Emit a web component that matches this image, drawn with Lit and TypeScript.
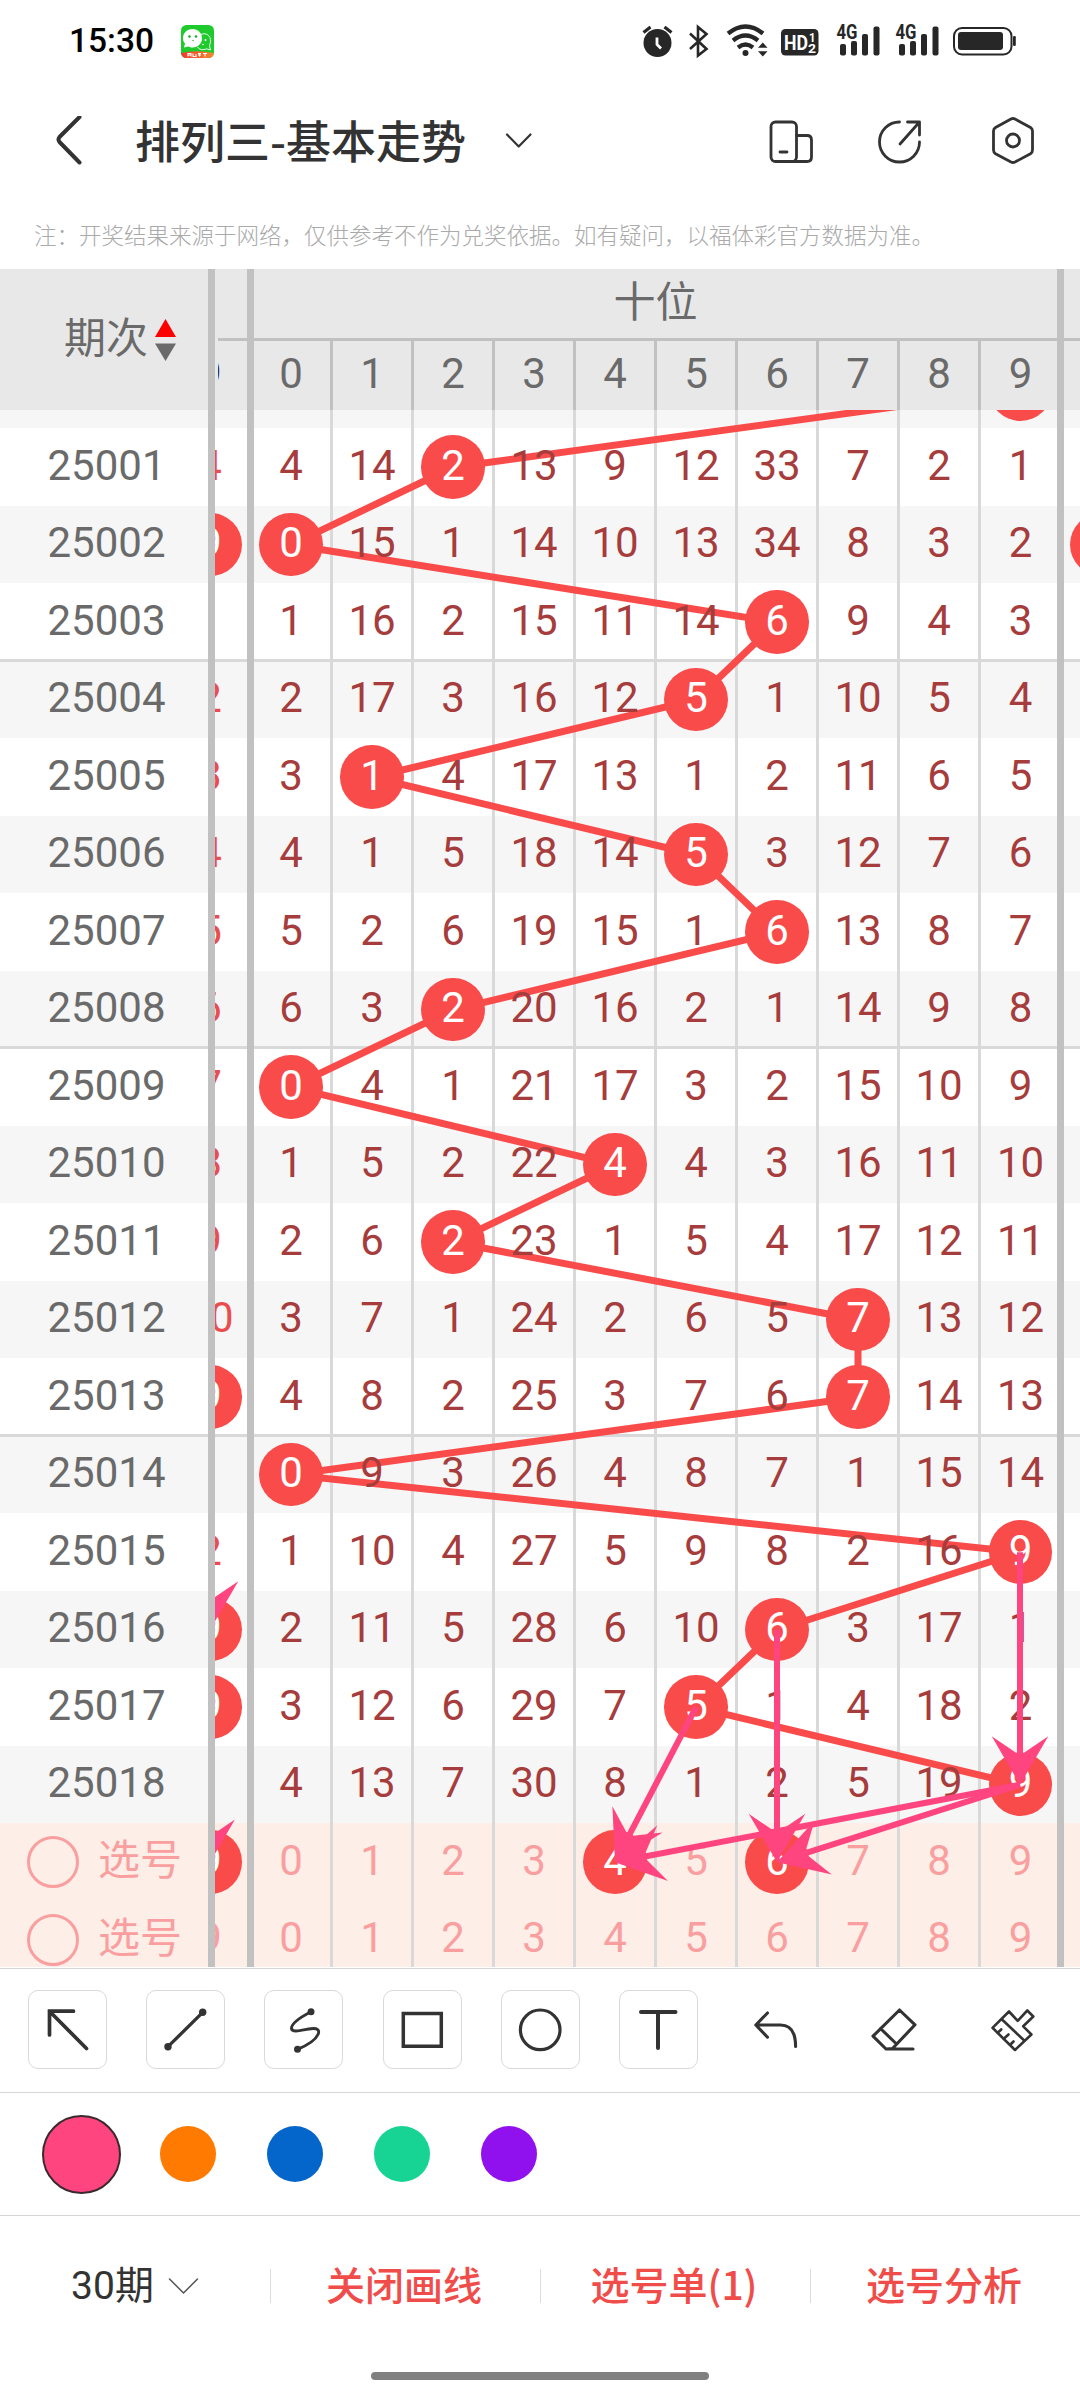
import { LitElement, html, css, svg, nothing } from "lit";
import { customElement, property } from "lit/decorators.js";
import { classMap } from "lit/directives/class-map.js";

interface Draw {
  issue: string;
  /** Trailing column of the group scrolled off to the left; "*" marks a hit. */
  prev: string;
  cells: string[];
  hit: number;
}

/* The first entry sits behind the header: only the foot of its ball shows. */
const raw: [string, string, string, number][] = [
  ["", "", ",,,,,,,,,", 9],
  ["25001", "4", "4,14,2,13,9,12,33,7,2,1", 2],
  ["25002", "9*", "0,15,1,14,10,13,34,8,3,2", 0],
  ["25003", "", "1,16,2,15,11,14,6,9,4,3", 6],
  ["25004", "2", "2,17,3,16,12,5,1,10,5,4", 5],
  ["25005", "3", "3,1,4,17,13,1,2,11,6,5", 1],
  ["25006", "4", "4,1,5,18,14,5,3,12,7,6", 5],
  ["25007", "5", "5,2,6,19,15,1,6,13,8,7", 6],
  ["25008", "6", "6,3,2,20,16,2,1,14,9,8", 2],
  ["25009", "7", "0,4,1,21,17,3,2,15,10,9", 0],
  ["25010", "8", "1,5,2,22,4,4,3,16,11,10", 4],
  ["25011", "9", "2,6,2,23,1,5,4,17,12,11", 2],
  ["25012", "10", "3,7,1,24,2,6,5,7,13,12", 7],
  ["25013", "9*", "4,8,2,25,3,7,6,7,14,13", 7],
  ["25014", "", "0,9,3,26,4,8,7,1,15,14", 0],
  ["25015", "2", "1,10,4,27,5,9,8,2,16,9", 9],
  ["25016", "9*", "2,11,5,28,6,10,6,3,17,1", 6],
  ["25017", "9*", "3,12,6,29,7,5,1,4,18,2", 5],
  ["25018", "", "4,13,7,30,8,1,2,5,19,9", 9],
];
const draws: Draw[] = raw.map(([issue, prev, c, hit]) => ({ issue, prev, cells: c.split(","), hit }));
const digits = ["0", "1", "2", "3", "4", "5", "6", "7", "8", "9"];
const picks = [
  { prev: "9*", chosen: [4, 6] },
  { prev: "9", chosen: [] as number[] },
];

const ROW = 77.5;
const colX = (c: number) => 76 + 81 * c;
const rowY = (r: number) => ROW * (r + 0.5);

/* [fromX, fromY, toX, toY, head scale] */
const arrows: number[][] = [
  [colX(9), rowY(15), colX(9), rowY(18), 1],
  [colX(6), rowY(16), colX(6), rowY(19), 1],
  [colX(5), rowY(17), colX(4), rowY(19), 1],
  [colX(9), rowY(18), colX(4), rowY(19), 1],
  [colX(9), rowY(18), colX(6), rowY(19), 1],
  [colX(-1), rowY(13), colX(-1), rowY(16), 1],
  [colX(-1), rowY(17), colX(-1), rowY(19), 0.88],
];

const arrowShape = ([x1, y1, x2, y2, s]: number[]) => {
  const len = Math.hypot(x2 - x1, y2 - y1);
  const dx = (x2 - x1) / len;
  const dy = (y2 - y1) / len;
  const at = (back: number, side: number) =>
    `${(x2 - dx * back * s + dy * side * s).toFixed(1)},${(y2 - dy * back * s - dx * side * s).toFixed(1)}`;
  return svg`
    <line x1=${x1} y1=${y1} x2=${x2 - dx * 25} y2=${y2 - dy * 25} stroke="#ff457f" stroke-width="6"/>
    <polygon points="${at(0, 0)} ${at(48.5, 28.3)} ${at(32, 4)} ${at(32, -4)} ${at(48.5, -28.3)}" fill="#ff457f"/>`;
};

const groupClass = (i: number) => ({
  row: true,
  alt: i % 2 === 0,
  last: i % 5 === 3 && i < draws.length - 1,
  first: i > 3 && i % 5 === 4,
});

@customElement("trend-board")
class TrendBoard extends LitElement {
  static styles = css`
    :host { display: block; height: 1698px; overflow: hidden; font: 42px/48px Roboto, "Noto Sans CJK SC", sans-serif; color: #6a6a6a; }
    .head { display: flex; height: 141px; background: #e8e8e8; }
    .issue-head { box-sizing: border-box; width: 215px; border-right: 7px solid #c1c1c1; display: flex; align-items: center; padding-left: 64px; gap: 7px; }
    .issue-head span { width: 84px; padding-bottom: 1px; }
    .sort { width: 21px; height: 42px; display: block; }
    .head-grid { flex: 1; overflow: hidden; }
    .titles { display: grid; grid-template-columns: 32px 810px 23px; height: 69px; }
    .titles > div + div { border-left: 7px solid #c1c1c1; }
    .group-name { text-align: center; }
    .group-name span { display: block; padding-top: 10px; line-height: 48px; }
    .nums { margin-left: 3px; border-top: 3px solid #c1c1c1; height: 69px; overflow: hidden; }
    .nums .cells { margin-left: -3px; height: 69px; width: 865px; }
    .nums .cell { border-color: #c1c1c1; padding-bottom: 4px; }
    .nums .cell.prev { color: #333; }
    .body { display: flex; height: 1557px; overflow: hidden; }
    .issues { box-sizing: border-box; width: 215px; border-right: 7px solid #c1c1c1; }
    .issues, .area { margin-top: -59.25px; height: 1627.5px; flex-shrink: 0; }
    .area { width: 865px; position: relative; overflow: hidden; }
    .row { height: 77.5px; background-color: #fff; background-repeat: no-repeat; }
    .row.alt { background-color: #f6f6f6; }
    .row.last { background-image: linear-gradient(#d9d9d9, #d9d9d9); background-size: 100% 2px; background-position: 0 100%; }
    .row.first { background-image: linear-gradient(#d9d9d9, #d9d9d9); background-size: 100% 1px; background-position: 0 0; }
    .row.pick { background-color: #feeee8; color: #fa9f9f; }
    .issue { box-sizing: border-box; padding: 0 0 2.5px 5px; display: flex; align-items: center; justify-content: center; }
    .issue.pick { padding: 0 0 0 27px; justify-content: flex-start; gap: 19px; }
    .radio { box-sizing: border-box; width: 52px; height: 52px; border: 3px solid #fa9f9f; border-radius: 50%; }
    .issue.pick span { margin-top: -2px; }
    .cells { display: grid; grid-template-columns: 32px 83px repeat(8, 81px) 79px 23px; }
    .cell { box-sizing: border-box; border-left: 3px solid #d9d9d9; display: flex; align-items: center; justify-content: center; min-width: 0; }
    .cell.prev { border-left: 0; }
    .cell.prev > * { margin-left: -42px; }
    .cell.start { border-left: 7px solid #c1c1c1; padding-right: 2px; }
    .cell.end { padding-left: 3px; }
    .cell.next { border-left: 7px solid #c1c1c1; }
    .cell.next > * { margin-left: 59px; }
    .row .cell { color: #a63c3c; }
    .row .cell.prev { color: #e94d4d; }
    .row.pick .cell { color: #fa9f9f; }
    .num { position: relative; z-index: 2; padding-bottom: 2.5px; }
    .hit { position: relative; z-index: 2; box-sizing: border-box; flex: none; width: 63.5px; height: 63.5px; border-radius: 50%; background: #fa4b4b; color: #fff; display: flex; align-items: center; justify-content: center; padding-bottom: 2.5px; }
    .layer { position: absolute; left: 0; top: 0; width: 865px; height: 1627.5px; z-index: 1; pointer-events: none; }
    .layer.top { z-index: 3; }
  `;

  private value(text: string, hit: boolean) {
    return hit ? html`<span class="hit">${text}</span>` : html`<span class="num">${text}</span>`;
  }

  private cells(prev: string, values: string[], hits: number[], nextHit = false) {
    return html`
      <div class="cell prev">${this.value(prev.replace("*", ""), prev.endsWith("*"))}</div>
      ${values.map(
        (v, c) => html`<div class=${classMap({ cell: true, start: c === 0, end: c === 9 })}>${this.value(v, hits.includes(c))}</div>`
      )}
      <div class="cell next">${nextHit ? this.value("", true) : nothing}</div>`;
  }

  render() {
    const trend = draws.map((d, r) => `${colX(d.hit)},${rowY(r)}`).join(" ");
    return html`
      <div class="head">
        <div class="issue-head">
          <span>期次</span>
          <svg class="sort" viewBox="0 0 21 42"><path d="M10.5 0 21 18H0z" fill="#f00"/><path d="M0 24.500H21L10.500 42z" fill="#6a6a6a"/></svg>
        </div>
        <div class="head-grid">
          <div class="titles"><div></div><div class="group-name"><span>十位</span></div><div></div></div>
          <div class="nums">
            <div class="cells">
              <div class="cell prev"><span>9</span></div>
              ${digits.map((d, c) => html`<div class=${classMap({ cell: true, start: c === 0, end: c === 9 })}>${d}</div>`)}
              <div class="cell next"></div>
            </div>
          </div>
        </div>
      </div>
      <div class="body">
        <div class="issues">
          ${draws.map((d, i) => html`<div class=${classMap({ ...groupClass(i), issue: true })}>${d.issue}</div>`)}
          ${picks.map(() => html`<div class="row issue pick"><i class="radio"></i><span>选号</span></div>`)}
        </div>
        <div class="area">
          ${draws.map(
            (d, i) => html`<div class=${classMap({ ...groupClass(i), cells: true })}>${this.cells(d.prev, d.cells, [d.hit], d.issue === "25002")}</div>`
          )}
          ${picks.map((p) => html`<div class="row cells pick">${this.cells(p.prev, digits, p.chosen)}</div>`)}
          <svg class="layer" viewBox="0 0 865 1627.5"><polyline points=${trend} fill="none" stroke="#fa4b4b" stroke-width="7"/></svg>
          <svg class="layer top" viewBox="0 0 865 1627.5">${arrows.map(arrowShape)}</svg>
        </div>
      </div>`;
  }
}

const toolIcons = [
  svg`<path d="M21.500 45V21.200H45.500M21.500 21.200 58.500 58.500" stroke-width="3.700" stroke-linejoin="miter"/>`,
  svg`<path d="M22 56.700 56.700 22.300" stroke-width="3.300"/><circle cx="22" cy="56.700" r="3.700" class="dot"/><circle cx="56.700" cy="22.300" r="3.700" class="dot"/>`,
  svg`<path d="M47 21.700C34 28.500 27 34 27.500 38.500C28 43.500 40 39.500 47 38.700C53.500 38 56 40 54 44.500C51 51 44 55 33.500 59.300" stroke-width="2.900"/><circle cx="47" cy="21.700" r="3.500" class="dot"/><circle cx="33.500" cy="59.300" r="3.500" class="dot"/>`,
  svg`<path d="M20.300 23.400H58.300V56.200H20.300z" stroke-width="3.500" stroke-linejoin="miter"/>`,
  svg`<circle cx="39.200" cy="39.800" r="19.800" stroke-width="3.200"/>`,
  svg`<path d="M22 22H56.500M39 22V58" stroke-width="4"/>`,
  svg`<path d="M30.500 23 18.800 35 30.500 47.200M18.800 35H43.500C54 35 58.600 42 58.600 56.500" stroke-width="3.100"/>`,
  svg`<path d="M44.500 20 60 34.800 37.500 58.500 31 59 18 46.200zM25.500 38.500 41 53.500M31 59H58" stroke-width="3.100"/>`,
  svg`<path d="M35 21.500 43.700 30.800 53.300 20.500 59.300 26.500 49.200 36.300 57.400 44.500 41 60 18.500 37.800zM28 29.500 50.200 50.500M23.500 43 27.200 39.500M29.500 49 34.500 44.500M36 55 39.500 51.500" stroke-width="2.600"/>`,
];

@customElement("draw-tools")
class DrawTools extends LitElement {
  static styles = css`
    :host { display: block; background: #fff; }
    .tools { box-sizing: border-box; height: 124px; border-top: 1.5px solid #d6d6d6; padding: 20.500px 0 0 28px; display: flex; gap: 39.200px; }
    .tool { box-sizing: border-box; width: 79px; height: 79px; border: 1px solid #d9d9d9; border-radius: 10px; flex: none; }
    .tool.plain { border-color: transparent; }
    .tool svg { display: block; width: 79px; height: 79px; margin: -1px; fill: none; stroke: #333; stroke-linecap: round; stroke-linejoin: round; }
    .tool .dot { fill: #333; stroke: none; }
    .swatches { box-sizing: border-box; height: 123px; border-top: 1.5px solid #d6d6d6; padding-left: 42px; display: flex; align-items: center; gap: 50.500px; }
    .swatch { width: 56.400px; height: 56.400px; border-radius: 50%; flex: none; }
    .swatch.pink { box-sizing: border-box; width: 79px; height: 79px; margin-right: -11.500px; background: #ff457f; border: 2px solid #3a2a30; }
    .orange { background: #ff7a00; }
    .blue { background: #0466cb; }
    .green { background: #18d494; }
    .purple { background: #9010ee; }
  `;

  render() {
    return html`
      <div class="tools">
        ${toolIcons.map((icon, i) => html`<div class=${classMap({ tool: true, plain: i > 5 })}><svg viewBox="0 0 79 79">${icon}</svg></div>`)}
      </div>
      <div class="swatches">
        ${["pink", "orange", "blue", "green", "purple"].map((c) => html`<div class="swatch ${c}"></div>`)}
      </div>`;
  }
}

@customElement("status-bar")
class StatusBar extends LitElement {
  @property() time = "";

  static styles = css`
    :host { box-sizing: border-box; display: flex; align-items: center; height: 82px; padding: 0 60px 0 69px; font: 500 33.500px/40px Roboto, sans-serif; color: #000; }
    .time { width: 112px; }
    .chat { display: block; width: 33px; height: 33px; }
    .system { display: block; width: 380px; height: 50px; margin-left: auto; }
    .tag { font: 700 12px Roboto, sans-serif; }
    .hd { font: 700 19.500px Roboto, sans-serif; }
    .net { font: 700 19.500px Roboto, sans-serif; }
  `;

  private bars(x: number) {
    return svg`<text class="net" x=${x - 3.5} y="38" textLength="21" lengthAdjust="spacingAndGlyphs">4G</text>
      <rect x=${x} y="43" width="6" height="11.500" rx="2"/><rect x=${x + 11} y="40" width="6" height="14.500" rx="2"/>
      <rect x=${x + 22} y="33" width="6" height="21.500" rx="2"/><rect x=${x + 33.5} y="25.500" width="6" height="29" rx="2"/>`;
  }

  render() {
    return html`
      <span class="time">${this.time}</span>
      <svg class="chat" viewBox="0 0 33 33">
        <defs><clipPath id="r"><rect width="33" height="33" rx="5.500"/></clipPath>
        <linearGradient id="g"><stop stop-color="#f03a2c"/><stop offset="1" stop-color="#f58a30"/></linearGradient></defs>
        <g clip-path="url(#r)">
          <rect width="33" height="33" fill="#1fcb2c"/>
          <path d="M20 9.500C25 7 30 11 29.500 16C29.500 18.500 28.500 20 28.500 21L29.500 25L25.500 23.800C22 25.500 18 24.500 16.500 22" fill="none" stroke="#fff" stroke-width=".9"/>
          <path d="M11.500 4C17 4 21 8 21 13.300C21 18.500 17 22.500 11.500 22.500C9.500 22.500 8.500 22 7.500 21.500L3 22.500L4 18.500C2.500 17 2 15 2 13.300C2 8 6 4 11.500 4z" fill="#fff"/>
          <circle cx="8.500" cy="11.500" r="1.300" fill="#1fa52c"/><circle cx="15" cy="11.500" r="1.300" fill="#1fa52c"/><circle cx="12" cy="15.500" r=".7" fill="#1fa52c"/>
          <circle cx="24.500" cy="15" r="1" fill="#fff"/><circle cx="22" cy="19.500" r=".8" fill="#fff"/>
          <path d="M0 28Q16 24.500 33 28V33H0z" fill="url(#g)"/>
          <path d="M7 31.500V28.500H10V31.500M7 30H10M12 28.500V31.500H15V29M17 28.500H20M17 30H20M18.500 28.500V31.500M22 28.500H26M24 28.500V31.500" stroke="#fff" stroke-width="1.100" fill="none"/>
        </g>
      </svg>
      <svg class="system" viewBox="640 15 380 50" fill="#272727">
        <circle cx="657.500" cy="42" r="14"/><path d="M643.500 31.500 650.500 26M671.500 31.500 664.500 26" stroke="#272727" stroke-width="3.200"/>
        <path d="M657 36.500V43.500L661 47.500" fill="none" stroke="#fff" stroke-width="2.800"/>
        <path d="M690 32.500 706.500 48 698 54.500V26L706.500 33 690 48" fill="none" stroke="#272727" stroke-width="2.600"/>
        <g fill="none" stroke="#272727" stroke-width="4.300"><path d="M728 32.500Q745.500 18.500 763 32.500"/><path d="M733 39.500Q745.500 29.500 758 39.500"/><path d="M738 46.500Q745.500 40.500 753 46.500"/></g>
        <circle cx="745.500" cy="52" r="3"/><path d="M762.800 41.500 767.500 46.700H758zM762.800 55.500 758 50.200H767.500z"/>
        <rect x="781" y="28" width="37.500" height="26.500" rx="4.500"/>
        <g fill="#fff"><text class="hd" x="784" y="48.500" textLength="24" lengthAdjust="spacingAndGlyphs">HD</text><text class="tag" x="809" y="41" textLength="6.500" lengthAdjust="spacingAndGlyphs">1</text><text class="tag" x="808" y="51.700" textLength="8" lengthAdjust="spacingAndGlyphs">2</text></g>
        ${this.bars(840)}${this.bars(899)}
        <rect x="954" y="27" width="57.500" height="26.500" rx="8" fill="none" stroke="#272727" stroke-width="2"/>
        <rect x="958" y="31" width="45" height="18" rx="3"/><rect x="1013" y="35" width="2.800" height="10" rx="1.200"/>
      </svg>`;
  }
}

@customElement("app-root")
class AppRoot extends LitElement {
  static styles = css`
    :host { display: block; width: 1080px; height: 2400px; overflow: hidden; background: #fff; font-family: Roboto, "Noto Sans CJK SC", sans-serif; color: #333; }
    .bar { box-sizing: border-box; height: 118px; display: flex; align-items: center; padding: 0 44.500px 0 54px; }
    .bar svg, .chevron { display: block; flex: none; fill: none; stroke: #333; stroke-width: 2.800; stroke-linecap: round; stroke-linejoin: round; }
    .back { width: 29px; height: 50px; }
    .title { margin: -2px 37px 0 52px; font: 500 45px/60px "Noto Sans CJK SC", sans-serif; white-space: nowrap; }
    .bar .drop { width: 31px; height: 20px; stroke-width: 2.200; margin-top: -2px; }
    .actions { display: flex; align-items: center; gap: 62px; margin-left: auto; }
    .actions svg { width: 46px; height: 50px; }
    .actions .gear { margin-left: 5.500px; }
    .note { height: 69px; padding-left: 34px; font: 300 22.500px/69px "Noto Sans CJK SC", sans-serif; color: #aaa; white-space: nowrap; }
    .board { margin-bottom: 1px; }
    .footer { box-sizing: border-box; height: 140px; border-top: 1.500px solid #d6d6d6; display: grid; grid-template-columns: repeat(4, 270px); align-items: center; font-size: 39px; line-height: 34px; }
    .item { box-sizing: border-box; height: 34px; display: flex; align-items: center; justify-content: center; white-space: nowrap; }
    .item + .item { border-left: 1px solid #dcdcdc; padding-right: 3px; color: #f04d4a; font-weight: 500; font-family: "Noto Sans CJK SC", sans-serif; }
    .item + .item span { position: relative; top: -3px; }
    .chevron { width: 31px; height: 18px; margin-left: 14px; stroke: #555; stroke-width: 1.500; }
    .home { width: 338px; height: 8px; margin: 17px auto 0; border-radius: 4px; background: #808080; }
  `;

  render() {
    return html`
      <status-bar time="15:30"></status-bar>
      <div class="bar">
        <svg class="back" viewBox="54 116 29 50"><path d="M79.500 117 59.500 137Q57.500 139.500 59.500 142L79.500 162.500" stroke-width="4"/></svg>
        <div class="title">排列三-基本走势</div>
        <svg class="drop" viewBox="503 131 31 20"><path d="M507 135.500 518.700 147.500 530.500 135.500"/></svg>
        <div class="actions">
          <svg viewBox="768 117 46 50"><rect x="771" y="123" width="25.500" height="39.500" rx="4.500"/><path d="M796.500 136.500H807Q811.500 136.500 811.500 141V158Q811.500 162.500 807 162.500H792M780 153H787"/></svg>
          <svg viewBox="875 117 46 50"><path d="M898.500 123A20 20 0 1 0 918.500 143M906.500 123H918.500V136M918.500 123 899 145"/></svg>
          <svg class="gear" viewBox="989.500 117 46 50"><path d="M1010.500 120Q1012.500 119 1014.500 120L1030 128.500Q1032 129.700 1032 132V151Q1032 153.500 1030 154.700L1014.500 163Q1012.500 164 1010.500 163L995 154.700Q993 153.500 993 151V132Q993 129.700 995 128.500z"/><circle cx="1012.500" cy="141.500" r="6.500"/></svg>
        </div>
      </div>
      <div class="note">注：开奖结果来源于网络，仅供参考不作为兑奖依据。如有疑问，以福体彩官方数据为准。</div>
      <trend-board class="board"></trend-board>
      <draw-tools></draw-tools>
      <div class="footer">
        <div class="item"><span>30期</span><svg class="chevron" viewBox="0 0 31 18"><path d="M1.500 2 15.500 16 29.500 2"/></svg></div>
        <div class="item"><span>关闭画线</span></div>
        <div class="item"><span>选号单(1)</span></div>
        <div class="item"><span>选号分析</span></div>
      </div>
      <div class="home"></div>`;
  }
}
